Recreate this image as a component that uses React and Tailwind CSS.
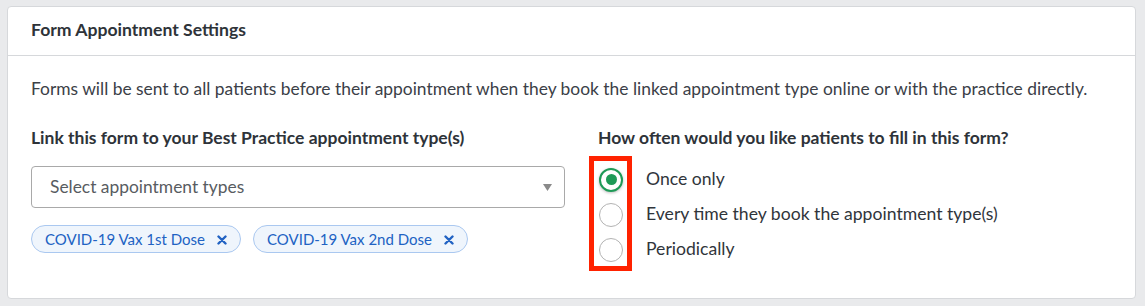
import React from "react";

function Radio({ checked }) {
  return (
    <span
      className={
        "flex h-[24px] w-[24px] shrink-0 items-center justify-center rounded-full bg-white " +
        (checked
          ? "border-2 border-[#1e9a57] shadow-[0_1px_3px_rgba(0,0,0,0.25)]"
          : "border border-[#b3b3b3]")
      }
    >
      {checked && <span className="h-[11px] w-[11px] rounded-full bg-[#1e9a57]" />}
    </span>
  );
}

function Chip({ label }) {
  return (
    <span className="flex h-[28px] items-center gap-[12px] rounded-full border border-[#aac8f0] bg-[#eff5fc] pl-[13px] pr-[13px] text-[15px] text-[#2162c3]">
      {label}
      <svg width="10" height="10" viewBox="0 0 10 10" className="mt-[1px]">
        <path d="M1.5 1.5 L8.5 8.5 M8.5 1.5 L1.5 8.5" stroke="#2162c3" strokeWidth="2.4" strokeLinecap="round" />
      </svg>
    </span>
  );
}

export default function App() {
  const options = [
    { label: "Once only", checked: true },
    { label: "Every time they book the appointment type(s)", checked: false },
    { label: "Periodically", checked: false },
  ];
  return (
    <div
      className="h-[306px] w-[1145px] bg-[#e9eaec] pb-[7px] pl-[7px] pr-[9px] pt-[6px]"
      style={{ fontFamily: "Lato, 'Open Sans', sans-serif" }}
    >
      <div className="h-full rounded-[4px] border border-[#d6d8db] bg-white">
        <div className="flex h-[49px] items-center border-b border-[#d6d8db] px-[23px] pb-[1px] text-[17.6px] font-bold text-[#2e3339]">
          Form Appointment Settings
        </div>
        <div className="px-[23px] pt-[21px]">
          <p className="text-[17.4px] leading-[24px] text-[#3b4047]">
            Forms will be sent to all patients before their appointment when they book the linked appointment type online or with the practice directly.
          </p>
          <div className="mt-[25px] flex gap-[24px]">
            <div className="w-[534px]">
              <div className="text-[17.5px] font-bold leading-[24px] text-[#2e3339]">
                Link this form to your Best Practice appointment type(s)
              </div>
              <div className="mt-[16px] flex h-[42px] items-center justify-between rounded-[4px] border border-[#a9a9a9] pl-[18px] pr-[12px] text-[17.4px] text-[#585c61]">
                <span>Select appointment types</span>
                <svg width="9" height="7" viewBox="0 0 9 7">
                  <path d="M0 0 H9 L4.5 7 Z" fill="#8a8a8a" />
                </svg>
              </div>
              <div className="mt-[17px] flex gap-[12px]">
                <Chip label="COVID-19 Vax 1st Dose" />
                <Chip label="COVID-19 Vax 2nd Dose" />
              </div>
            </div>
            <div className="relative">
              <div className="pl-[9px] text-[17.5px] font-bold leading-[24px] text-[#2e3339]">
                How often would you like patients to fill in this form?
              </div>
              <div className="mt-[12px] flex flex-col">
                {options.map((o) => (
                  <div key={o.label} className="flex h-[35px] items-center gap-[23px] pl-[10px] text-[17.6px] text-[#30353b]">
                    <Radio checked={o.checked} />
                    <span>{o.label}</span>
                  </div>
                ))}
              </div>
              <div className="pointer-events-none absolute left-0 top-[30px] h-[115px] w-[43px] border-[5px] border-[#ff2200]" />
            </div>
          </div>
        </div>
      </div>
    </div>
  );
}
